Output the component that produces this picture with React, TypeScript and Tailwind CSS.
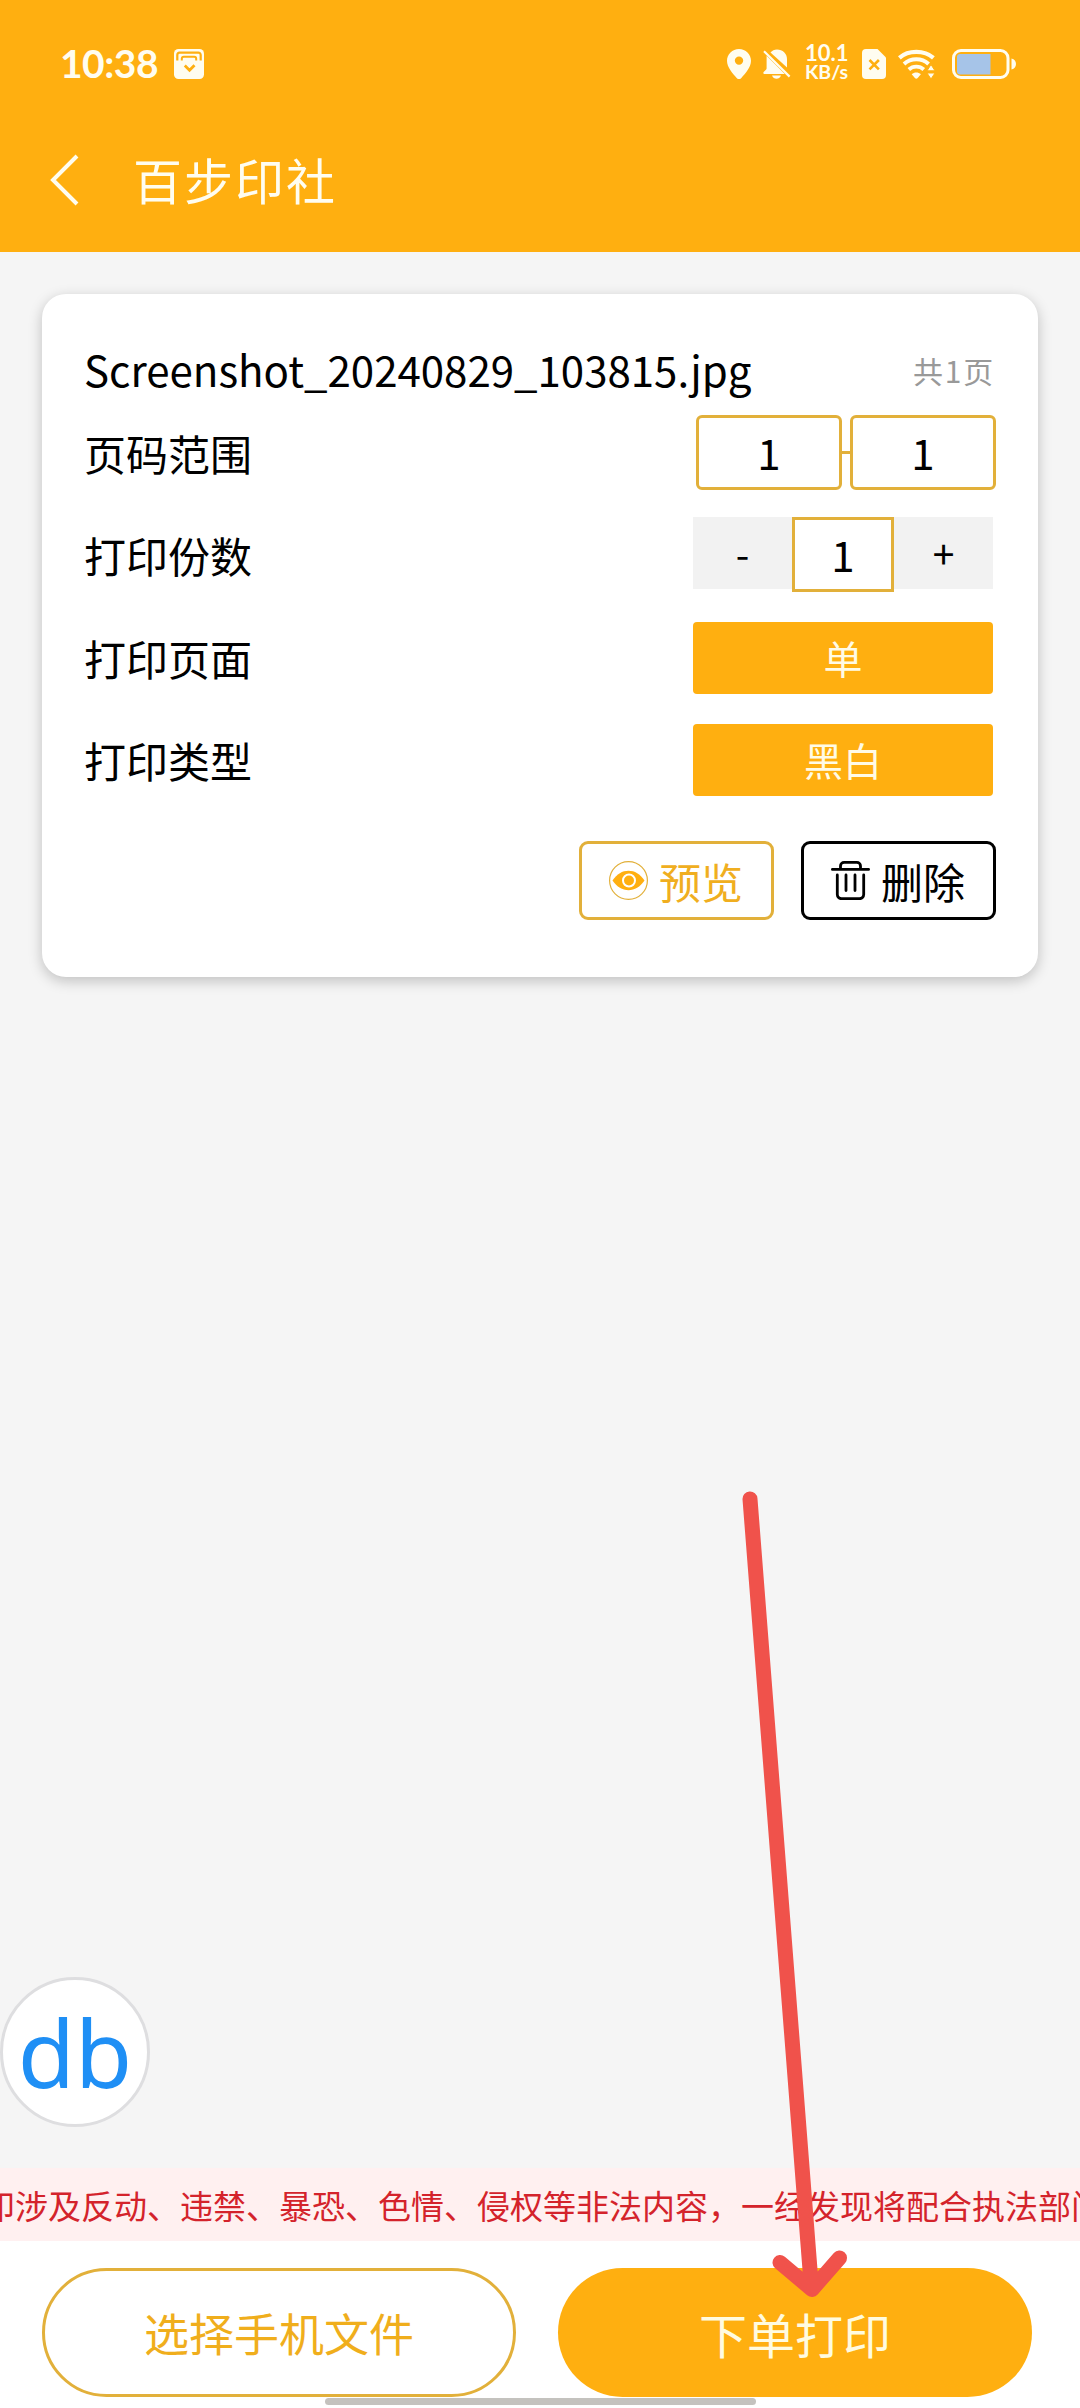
import { ReactNode } from "react";

const labelClass = "text-[42px] leading-none text-black";
const selectClass =
  "flex h-[72px] w-[300px] items-center justify-center rounded-[4px] bg-[#ffaf10] pb-[2px] text-[39px] leading-none text-[#fffbe6]";

function StatusBar() {
  return (
    <div className="flex h-[126px] items-center pt-[2px] pr-[63px] pl-[60px] text-[#fffdf0]">
      <span className="w-[114px] pb-[1px] font-['Lato','Noto_Sans',sans-serif] text-[39px] leading-none font-bold tracking-[-0.5px]">
        10:38
      </span>
      <svg width="30" height="30" viewBox="0 0 30 30" fill="none">
        <rect width="30" height="30" rx="4.5" fill="currentColor" />
        <path
          d="M3.300 11.600V6a2.400 2.400 0 0 1 2.400-2.400h18.600A2.400 2.400 0 0 1 26.700 6v5.600"
          stroke="#ffaf10"
          strokeWidth="2.200"
        />
        <path
          d="M7.800 11.600V9.800a2 2 0 0 1 2-2h10.400a2 2 0 0 1 2 2v1.800"
          stroke="#ffaf10"
          strokeWidth="2"
        />
        <path d="m10.800 16.600 4.700 4.600 5-5" stroke="#ffaf10" strokeWidth="2.800" />
      </svg>

      <div className="ml-auto flex items-center">
        <svg width="24" height="30" viewBox="0 0 24 30" fill="currentColor">
          <path
            fillRule="evenodd"
            d="M12 0C5.300 0 0 5.200 0 11.800c0 6.800 6 13 9.700 17.200a3 3 0 0 0 4.600 0C18 24.800 24 18.600 24 11.800 24 5.200 18.700 0 12 0Zm0 7.400a4.200 4.200 0 1 1 0 8.400 4.200 4.200 0 0 1 0-8.400Z"
          />
        </svg>
        <svg
          className="ml-[12px]"
          width="28"
          height="30"
          viewBox="0 0 28 30"
          fill="currentColor"
        >
          <path d="M7.500 3.400C9.200 1.400 11.300.4 14 .4c5.700 0 10 4.200 10 9.600V18.500Z" />
          <path d="M3.600 6.700 21.800 25H1.600a1.200 1.200 0 0 1-.7-2.200l2.300-2.300c.4-.4.400-.8.400-1.400Z" />
          <path d="M9 26.400h9c-1 2.200-2.400 3.300-4.500 3.300S10 28.600 9 26.400Z" />
          <path
            d="M1 2.300 26.600 27.600"
            stroke="currentColor"
            strokeWidth="2.200"
          />
        </svg>
        <p className="ml-[14px] w-[46px] pb-[4px] font-['Lato','Noto_Sans',sans-serif] text-[22px] leading-[18px] font-bold">
          10.1
          <br />
          <span className="text-[19.500px]">KB/s</span>
        </p>
        <svg
          className="ml-[11px]"
          width="24"
          height="30"
          viewBox="0 0 24 30"
          fill="none"
        >
          <path
            d="M4 0h11.500L24 8.500V26a4 4 0 0 1-4 4H4a4 4 0 0 1-4-4V4a4 4 0 0 1 4-4Z"
            fill="currentColor"
          />
          <path
            d="m7.500 11 9.400 9.400M16.900 11l-9.400 9.400"
            stroke="#ffaf10"
            strokeWidth="2.600"
          />
        </svg>
        <svg
          className="ml-[12px]"
          width="37"
          height="30"
          viewBox="0 0 37 30"
          fill="none"
        >
          <path
            d="M1.300 8.800C10.500.8 26.200.8 35.400 8.800"
            stroke="currentColor"
            strokeWidth="4.200"
          />
          <path
            d="M6 14.900c7-6.200 17.700-6.200 24.600 0"
            stroke="currentColor"
            strokeWidth="4"
          />
          <path
            d="M10.800 20.500c4.300-3.900 10.700-3.900 15 0"
            stroke="currentColor"
            strokeWidth="3.800"
          />
          <path
            d="M13.700 25.200c2.700-2.300 6.500-2.300 9.200 0l-3.200 3.700a1.900 1.900 0 0 1-2.800 0Z"
            fill="currentColor"
          />
          <path
            d="M33 15.500l4 6.300h-8ZM33 30l4-6h-8Z"
            fill="currentColor"
            stroke="#ffaf10"
            strokeWidth="1"
          />
        </svg>
        <svg
          className="ml-[17px]"
          width="65"
          height="30"
          viewBox="0 0 65 30"
          fill="none"
        >
          <rect
            x="1.500"
            y="1.500"
            width="54.500"
            height="27"
            rx="7.500"
            stroke="currentColor"
            strokeWidth="3"
          />
          <path
            d="M8 5h30.500v20.500H8a3 3 0 0 1-3-3V8a3 3 0 0 1 3-3Z"
            fill="#a6c4e8"
          />
          <path d="M59.500 9.500c6 1.200 6 9.800 0 11Z" fill="currentColor" />
        </svg>
      </div>
    </div>
  );
}

function Row({ label, children }: { label: string; children: ReactNode }) {
  return (
    <div className="flex items-center justify-between">
      <p className={labelClass}>{label}</p>
      {children}
    </div>
  );
}

function FileCard() {
  return (
    <div className="mx-[42px] mt-[42px] h-[683px] rounded-[24px] bg-white pt-[48px] pr-[45px] pl-[42px] shadow-[0_4px_14px_rgba(0,0,0,0.22)]">
      <div className="flex h-[54px] items-center justify-between">
        <p className="text-[42px] leading-none text-black">
          Screenshot_20240829_103815.jpg
        </p>
        <p className="-mr-[2px] pt-[2px] text-[30px] leading-none tracking-[1.800px] text-[#999999]">
          共1页
        </p>
      </div>

      <div className="mt-[19px] flex flex-col">
        <Row label="页码范围">
          <div className="-mr-[3px] flex items-center text-[42px] leading-none">
            <div className="flex h-[75px] w-[146px] items-center justify-center rounded-[6px] border-3 border-[#e2b03a] pb-[2px]">
              1
            </div>
            <div className="h-[3px] w-[8px] bg-[#e2b03a]" />
            <div className="flex h-[75px] w-[146px] items-center justify-center rounded-[6px] border-3 border-[#e2b03a] pb-[2px]">
              1
            </div>
          </div>
        </Row>

        <div className="mt-[27px]">
          <Row label="打印份数">
            <div className="flex items-start text-[42px] leading-none">
              <button className="flex h-[72px] w-[99px] items-center justify-center bg-[#f2f2f2] pb-[2px] text-[39px]">
                -
              </button>
              <div className="flex h-[75px] w-[102px] items-center justify-center border-3 border-[#e2b03a] bg-white pb-[2px]">
                1
              </div>
              <button className="flex h-[72px] w-[99px] items-center justify-center bg-[#f2f2f2] pb-[2px] text-[39px]">
                +
              </button>
            </div>
          </Row>
        </div>

        <div className="mt-[30px]">
          <Row label="打印页面">
            <button className={selectClass}>单</button>
          </Row>
        </div>

        <div className="mt-[30px]">
          <Row label="打印类型">
            <button className={selectClass}>黑白</button>
          </Row>
        </div>
      </div>

      <div className="-mr-[3px] mt-[45px] flex justify-end gap-[27px] text-[42px] leading-none">
        <button className="flex h-[79px] w-[195px] items-center rounded-[9px] border-3 border-[#e2b03a] pl-[27px] text-[#f0ae20]">
          <svg width="39" height="39" viewBox="0 0 39 39" fill="none">
            <circle cx="19.500" cy="19.500" r="18.900" stroke="#e2b03a" strokeWidth="1.200" />
            <path
              d="M3.500 19.500C8 13 13.300 9.800 19.500 9.800S31 13 35.500 19.500C31 26 25.700 29.200 19.500 29.200S8 26 3.500 19.500Z"
              fill="#ffaf10"
            />
            <circle cx="20" cy="19.500" r="6" stroke="#fff" strokeWidth="2" />
          </svg>
          <span className="ml-[11px]">预览</span>
        </button>
        <button className="flex h-[79px] w-[195px] items-center rounded-[9px] border-3 border-black pl-[27px] text-black">
          <svg
            width="39"
            height="39"
            viewBox="0 0 39 39"
            fill="none"
            stroke="currentColor"
            strokeWidth="2.800"
            strokeLinecap="round"
          >
            <path d="M1.400 8.400h36.200M9.500 8V5a3.600 3.600 0 0 1 3.600-3.600h12.800A3.600 3.600 0 0 1 29.500 5v3M6.300 14v19.500a4.200 4.200 0 0 0 4.200 4.200h18a4.200 4.200 0 0 0 4.200-4.200V14M15 14v15.500M24 14v15.500" />
          </svg>
          <span className="ml-[11px]">删除</span>
        </button>
      </div>
    </div>
  );
}

export default function App() {
  return (
    <div className="relative flex h-[2408px] w-[1080px] flex-col overflow-hidden bg-[#f5f5f5] font-['Noto_Sans_CJK_SC',sans-serif]">
      <header className="h-[252px] bg-[#ffaf10]">
        <StatusBar />
        <div className="flex h-[108px] items-center pl-[50px] text-[#fffdf0]">
          <svg width="30" height="52" viewBox="0 0 30 52" fill="none">
            <path d="M27 2 3 26l24 24" stroke="currentColor" strokeWidth="4" />
          </svg>
          <h1 className="ml-[53px] pb-[3px] text-[49px] leading-none tracking-[2px]">
            百步印社
          </h1>
        </div>
      </header>

      <main className="flex-1">
        <FileCard />
      </main>

      <div className="flex h-[73px] items-center overflow-hidden bg-[#fff0f0]">
        <p className="-ml-[18px] pt-[2px] text-[33px] leading-none whitespace-nowrap text-[#d4232b]">
          印涉及反动、违禁、暴恐、色情、侵权等非法内容，一经发现将配合执法部门
        </p>
      </div>

      <footer className="flex h-[167px] gap-[42px] bg-white px-[42px] pt-[27px]">
        <button className="h-[129px] w-[474px] rounded-full border-3 border-[#e2b03a] text-[45px] leading-none text-[#f0ae1c]">
          选择手机文件
        </button>
        <button className="h-[129px] w-[474px] rounded-full bg-[#ffaf10] text-[48px] leading-none text-[#fffbe0]">
          下单打印
        </button>
      </footer>

      <div className="absolute top-[1977px] left-0 flex size-[150px] items-center justify-center rounded-full border-3 border-[#dedee0] bg-white font-['Noto_Sans',sans-serif] text-[93px] leading-none text-[#1f8ff5]">
        db
      </div>

      {/* system gesture bar */}
      <div className="absolute top-[2398px] left-[325px] h-[7px] w-[431px] rounded-full bg-[#c4c2be]" />

      {/* pointer to the order button */}
      <svg
        className="pointer-events-none absolute top-[1480px] left-[740px]"
        width="120"
        height="830"
        viewBox="740 1480 120 830"
        fill="none"
        stroke="#f0524b"
        strokeWidth="15"
        strokeLinecap="round"
        strokeLinejoin="round"
      >
        <path d="M750 1499 811.500 2289M780 2262.500 812 2289.500 839.500 2258" />
      </svg>
    </div>
  );
}
